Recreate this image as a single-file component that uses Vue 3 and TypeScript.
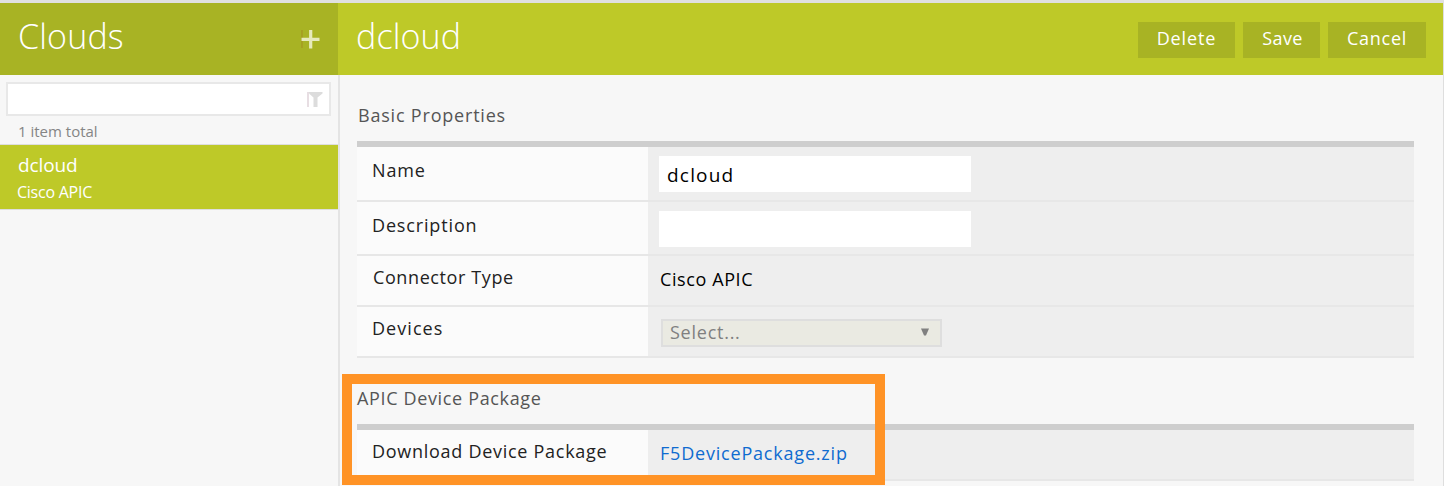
<script setup lang="ts">
import { ref } from 'vue'

const filter = ref('')
const name = ref('dcloud')
const description = ref('')
</script>

<template>
  <div class="app">
    <aside class="sidebar">
      <header class="side-head">
        <h1 class="title">Clouds</h1>
        <svg class="plus" width="19" height="19" viewBox="0 0 19 19">
          <path d="M1 0V18" stroke="#a3841f" stroke-width="1.4" fill="none" opacity="0.55" />
          <path d="M0.5 9.3H18.5M9.7 0V18.5" stroke="#e6eabc" stroke-width="3.2" fill="none" />
        </svg>
      </header>
      <div class="filter">
        <input v-model="filter" class="filter-input" aria-label="Filter" />
        <svg class="funnel" width="16" height="15" viewBox="0 0 16 15">
          <path d="M1 0V15" stroke="#e2d6dc" stroke-width="1.6" />
          <path d="M1.5 0H15.5V1.5L10.5 5.5V15H6.5V5.5L2.5 2Z" fill="#dcdcdc" />
        </svg>
      </div>
      <div class="count">1 item total</div>
      <div class="item">
        <div class="item-name">dcloud</div>
        <div class="item-type">Cisco APIC</div>
      </div>
    </aside>
    <main class="main">
      <header class="main-head">
        <h1 class="title">dcloud</h1>
        <div class="actions">
          <button class="btn delete">Delete</button>
          <button class="btn save">Save</button>
          <button class="btn cancel">Cancel</button>
        </div>
      </header>
      <section class="section">
        <h2 class="heading">Basic Properties</h2>
        <div class="row tall">
          <div class="label">Name</div>
          <div class="value"><input v-model="name" class="field" aria-label="Name" /></div>
        </div>
        <div class="row tall">
          <div class="label">Description</div>
          <div class="value"><input v-model="description" class="field" aria-label="Description" /></div>
        </div>
        <div class="row">
          <div class="label connector-label">Connector Type</div>
          <div class="value"><span class="text">Cisco APIC</span></div>
        </div>
        <div class="row">
          <div class="label devices-label">Devices</div>
          <div class="value">
            <div class="select">
              <span class="select-text">Select...</span>
              <svg class="arrow" width="8" height="8" viewBox="0 0 8 8"><path d="M0 0.5H8L5 7.5H3Z" fill="#808080" /></svg>
            </div>
          </div>
        </div>
      </section>
      <section class="section">
        <h2 class="heading package-heading">APIC Device Package</h2>
        <div class="row">
          <div class="label package-label">Download Device Package</div>
          <div class="value"><a class="link">F5DevicePackage.zip</a></div>
        </div>
      </section>
    </main>
    <div class="highlight"></div>
  </div>
</template>

<style>
body {
  margin: 0;
  overflow: hidden;
}
</style>

<style scoped>
.app {
  position: relative;
  display: flex;
  box-sizing: border-box;
  width: 1444px;
  height: 486px;
  overflow: hidden;
  border-top: 3px solid #e0e0e0;
  border-right: 1px solid #dedede;
  background: #f7f7f7;
  font-family: "Open Sans", "Noto Sans", sans-serif;
  font-size: 18px;
  color: #222;
}
.sidebar {
  width: 338px;
  flex: none;
}
.side-head {
  display: flex;
  justify-content: space-between;
  box-sizing: border-box;
  height: 72px;
  padding: 0 18px;
  background: #a8b324;
}
.title {
  margin: 0;
  padding-top: 11px;
  font-size: 34px;
  font-weight: 300;
  line-height: 44px;
  letter-spacing: 0.15px;
  color: #fff;
}
.plus {
  margin-top: 27px;
}
.filter {
  display: flex;
  align-items: center;
  box-sizing: border-box;
  width: 325px;
  height: 34px;
  margin: 7px 0 0 6px;
  padding-right: 6px;
  border: 2px solid #e8e8e8;
  background: #fff;
}
.filter-input {
  flex: 1;
  border: 0;
  outline: 0;
  background: transparent;
}
.count {
  height: 28px;
  padding-left: 18px;
  font-size: 15px;
  line-height: 31px;
  color: #858585;
}
.item {
  box-sizing: border-box;
  height: 66px;
  padding: 8px 0 0 18px;
  border-top: 1px solid #dedede;
  border-bottom: 1px solid #dedede;
  background: #bec928;
  color: #fff;
}
.item-name {
  font-size: 19px;
  line-height: 25px;
  letter-spacing: -0.1px;
}
.item-type {
  margin-left: -1px;
  font-size: 16px;
  line-height: 28px;
  letter-spacing: -0.25px;
}
.main {
  flex: 1;
  min-width: 0;
  background: linear-gradient(#e4e4e4, #e4e4e4) 0 0 / 2px 100% no-repeat;
}
.main-head {
  display: flex;
  justify-content: space-between;
  box-sizing: border-box;
  height: 72px;
  padding: 0 17px 0 18px;
  background: #bec928;
}
.actions {
  display: flex;
  gap: 8px;
  padding-top: 19px;
}
.btn {
  height: 36px;
  padding: 0 0 5px;
  border: 0;
  background: #a8b324;
  color: #fff;
  font-family: inherit;
  font-size: 18px;
  line-height: 30px;
}
.delete {
  width: 97px;
  letter-spacing: 0.9px;
}
.save {
  width: 77px;
  padding-left: 2px;
  letter-spacing: 0.4px;
}
.cancel {
  width: 98px;
  letter-spacing: 0.75px;
}
.section {
  padding: 0 29px 0 19px;
}
.heading {
  box-sizing: border-box;
  height: 72px;
  margin: 0;
  padding: 28px 0 0 1px;
  border-bottom: 6px solid #cecece;
  font-size: 18px;
  font-weight: 400;
  line-height: 24px;
  letter-spacing: 0.8px;
  color: #555;
}
.package-heading {
  padding-left: 0;
  letter-spacing: 0.65px;
}
.row {
  display: flex;
  box-sizing: border-box;
  height: 51px;
  border-bottom: 2px solid #e7e7e7;
}
.tall {
  height: 54.5px;
}
.label {
  box-sizing: border-box;
  width: 291px;
  padding: 9px 0 0 15px;
  background: #fbfbfb;
  line-height: 24px;
  letter-spacing: 0.85px;
}
.tall .label {
  padding-top: 11px;
}
.connector-label {
  padding-left: 16px;
  letter-spacing: 0.6px;
}
.devices-label {
  letter-spacing: 1.05px;
}
.package-label {
  letter-spacing: 0.72px;
}
.value {
  flex: 1;
  background: #eee;
}
.field {
  display: block;
  box-sizing: border-box;
  width: 312px;
  height: 36px;
  margin: 9px 0 0 11px;
  padding: 2px 8px 0;
  border: 0;
  outline: 0;
  background: #fff;
  color: #000;
  font-family: inherit;
  font-size: 19px;
  letter-spacing: 1.2px;
}
.text,
.link {
  display: block;
  padding: 11px 0 0 12px;
  line-height: 24px;
  letter-spacing: 0.6px;
  color: #000;
}
.link {
  letter-spacing: 0.8px;
  color: #0f6bd0;
}
.select {
  display: flex;
  justify-content: space-between;
  box-sizing: border-box;
  width: 281px;
  height: 28px;
  margin: 12px 0 0 13px;
  padding: 0 11px 0 7px;
  border: 2px solid #dedede;
  background: #eaeae2;
  color: #808080;
  letter-spacing: 0.75px;
}
.select-text {
  line-height: 23px;
}
.arrow {
  margin-top: 7px;
}
.highlight {
  position: absolute;
  left: 342px;
  top: 371px;
  box-sizing: border-box;
  width: 543px;
  height: 111px;
  border: 10px solid #ff9326;
}
</style>
